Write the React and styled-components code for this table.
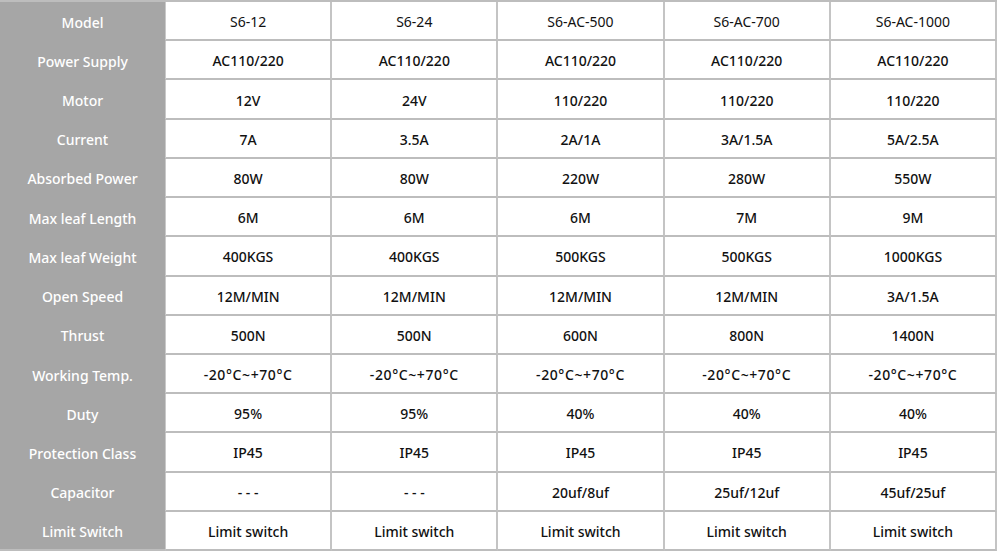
import React from "react";
import styled, { createGlobalStyle } from "styled-components";

const Global = createGlobalStyle`
  html, body { margin: 0; padding: 0; background: #ffffff; }
  body { font-family: "Noto Sans", "Liberation Sans", sans-serif; }
`;

const Page = styled.div`
  width: 1000px;
  height: 555px;
  background: #ffffff;
  overflow: hidden;
`;

const Table = styled.div`
  display: grid;
  grid-template-columns: 166px repeat(5, 1fr);
  grid-template-rows: repeat(14, 1fr);
  width: 997px;
  height: 551px;
  box-sizing: border-box;
  border-top: 2px solid #bdbdbd;
`;

const Label = styled.div`
  display: flex;
  align-items: center;
  justify-content: center;
  padding-top: 2px;
  background: #a6a6a6;
  color: #ffffff;
  font-size: 14px;
  font-weight: 500;
  border-right: 1px solid #c9c9c9;
  border-bottom: ${(p) => (p.$last ? "2px solid #bdbdbd" : "1px solid #a6a6a6")};
  box-sizing: border-box;
`;

const Cell = styled.div`
  display: flex;
  align-items: center;
  justify-content: center;
  padding-top: 2px;
  color: #111111;
  font-size: 14px;
  font-weight: ${(p) => (p.$regular ? 400 : 500)};
  letter-spacing: ${(p) => (p.$wide ? "0.6px" : "normal")};
  border-right: 2px solid #c4c4c4;
  border-bottom: 2px solid #bdbdbd;
  box-sizing: border-box;
  white-space: nowrap;
`;

const rows = [
  ["Model", "S6-12", "S6-24", "S6-AC-500", "S6-AC-700", "S6-AC-1000"],
  ["Power Supply", "AC110/220", "AC110/220", "AC110/220", "AC110/220", "AC110/220"],
  ["Motor", "12V", "24V", "110/220", "110/220", "110/220"],
  ["Current", "7A", "3.5A", "2A/1A", "3A/1.5A", "5A/2.5A"],
  ["Absorbed Power", "80W", "80W", "220W", "280W", "550W"],
  ["Max leaf Length", "6M", "6M", "6M", "7M", "9M"],
  ["Max leaf Weight", "400KGS", "400KGS", "500KGS", "500KGS", "1000KGS"],
  ["Open Speed", "12M/MIN", "12M/MIN", "12M/MIN", "12M/MIN", "3A/1.5A"],
  ["Thrust", "500N", "500N", "600N", "800N", "1400N"],
  ["Working Temp.", "-20°C~+70°C", "-20°C~+70°C", "-20°C~+70°C", "-20°C~+70°C", "-20°C~+70°C"],
  ["Duty", "95%", "95%", "40%", "40%", "40%"],
  ["Protection Class", "IP45", "IP45", "IP45", "IP45", "IP45"],
  ["Capacitor", "- - -", "- - -", "20uf/8uf", "25uf/12uf", "45uf/25uf"],
  ["Limit Switch", "Limit switch", "Limit switch", "Limit switch", "Limit switch", "Limit switch"],
];

export default function App() {
  return (
    <Page>
      <Global />
      <Table>
        {rows.map((r, i) => (
          <React.Fragment key={i}>
            <Label $last={i === rows.length - 1}>{r[0]}</Label>
            {r.slice(1).map((v, j) => (
              <Cell key={j} $regular={i === 0} $wide={i === 9}>
                {v}
              </Cell>
            ))}
          </React.Fragment>
        ))}
      </Table>
    </Page>
  );
}
